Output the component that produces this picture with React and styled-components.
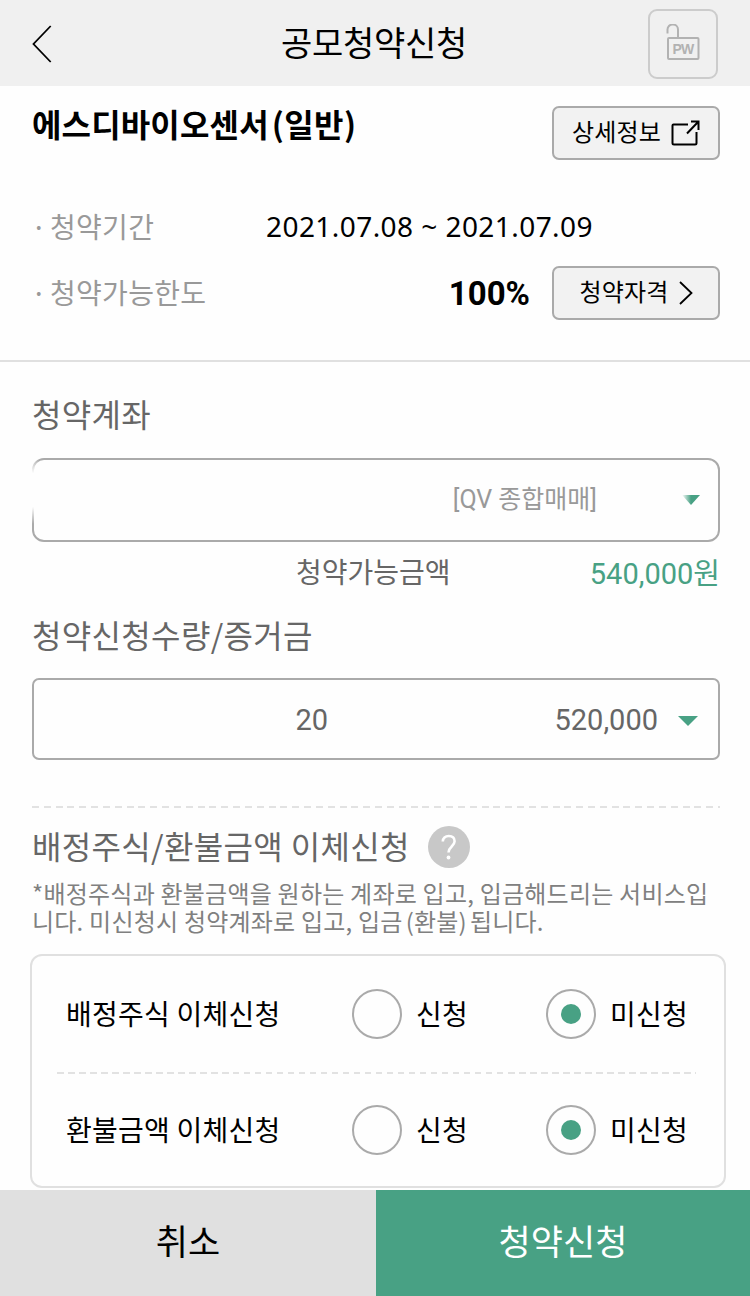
import React, { useState } from 'react';
import styled, { createGlobalStyle } from 'styled-components';

const GlobalStyle = createGlobalStyle`
  * {
    box-sizing: border-box;
  }

  body {
    margin: 0;
    background: #fefefe;
    color: #000;
    font-family: 'Noto Sans CJK KR', sans-serif;
  }

  button {
    font-family: inherit;
    color: inherit;
    cursor: pointer;
  }
`;

const Page = styled.div`
  display: flex;
  flex-direction: column;
  width: 750px;
  height: 1296px;
  overflow: hidden;
`;

const Header = styled.header`
  display: grid;
  grid-template-columns: 70px 1fr 70px;
  align-items: center;
  height: 86px;
  padding: 0 32px;
  background: #f0f0f0;
`;

const BackButton = styled.button`
  display: flex;
  padding: 2px 0 0;
  border: none;
  background: none;
`;

const HeaderTitle = styled.h1`
  margin: 0;
  padding: 0 2px 2px 0;
  font-size: 34px;
  font-weight: 400;
  line-height: 40px;
  letter-spacing: -0.3px;
  text-align: center;
`;

const LockButton = styled.button`
  display: flex;
  align-items: center;
  justify-content: center;
  width: 70px;
  height: 70px;
  padding: 0;
  margin-top: 2px;
  border: 2px solid #ccc;
  border-radius: 9px;
  background: #f0f0f0;
`;

const Summary = styled.section`
  height: 276px;
  padding: 20px 30px 0 32px;
  border-bottom: 2px solid #e0e0e0;
`;

const SummaryRow = styled.div`
  display: flex;
  align-items: center;
  height: ${(props) => props.$height}px;
  padding-top: ${(props) => props.$top || 0}px;
`;

const StockName = styled.h2`
  flex: 1;
  align-self: flex-start;
  margin: 0;
  font-size: 32px;
  font-weight: 700;
  line-height: 34px;
  letter-spacing: 0.15px;
`;

const Paren = styled.span`
  margin: 0 3px;
  letter-spacing: ${(props) => props.$spacing || 0.22}px;
`;

const SummaryLabel = styled.span`
  display: flex;
  width: 234px;
  padding-bottom: 2px;
  color: #999;
  font-size: 28px;
  line-height: 34px;
  letter-spacing: 0.3px;
`;

const Bullet = styled.span`
  width: 18px;
  margin-left: -1px;
  margin-right: 1px;
`;

const Period = styled.span`
  padding-bottom: 2px;
  font-family: 'Noto Sans', sans-serif;
  font-size: 28px;
  line-height: 34px;
  letter-spacing: 0.44px;
`;

const Limit = styled.strong`
  flex: 1;
  padding: 2px 22px 0 0;
  font-family: Roboto, sans-serif;
  font-size: 33px;
  font-weight: 700;
  line-height: 34px;
  text-align: right;
`;

const SmallButton = styled.button`
  display: flex;
  align-items: center;
  justify-content: center;
  gap: 10px;
  width: 168px;
  height: 54px;
  padding: 0;
  border: 2px solid #aaa;
  border-radius: 7px;
  background: #f2f2f2;
  font-size: 24px;
  line-height: 30px;
`;

const ButtonText = styled.span`
  padding-bottom: 4px;
  letter-spacing: 0.2px;
`;

const Form = styled.section`
  flex: 1;
  display: flex;
  flex-direction: column;
  padding: 33px 30px 0 32px;
`;

const FieldLabel = styled.h3`
  margin: 0 0 ${(props) => props.$gap || 0}px;
  color: #666;
  font-size: 32px;
  font-weight: 400;
  line-height: 36px;
  letter-spacing: 0.34px;
`;

const SelectBox = styled.div`
  position: relative;
  display: flex;
  align-items: center;
  height: ${(props) => props.$height}px;
  border: 2px solid #aaa;
  border-radius: ${(props) => props.$radius}px;
  cursor: pointer;
`;

const EdgeFade = styled.span`
  position: absolute;
  left: -8px;
  top: -8px;
  width: 44px;
  height: 76px;
  background: radial-gradient(ellipse 16px 34px at 6px 38px, #fefefe 50%, rgba(254, 254, 254, 0) 100%);
`;

const AccountName = styled.span`
  margin-left: auto;
  margin-right: 85px;
  color: #999;
  font-family: Roboto, 'Noto Sans CJK KR', sans-serif;
  font-size: 25px;
  line-height: 30px;
`;

const Quantity = styled.span`
  width: 294px;
  padding-top: 2px;
  color: #666;
  font-family: Roboto, sans-serif;
  font-size: 29px;
  line-height: 34px;
  text-align: right;
`;

const Deposit = styled.span`
  flex: 1;
  padding: 2px 20px 0 0;
  color: #666;
  font-family: Roboto, sans-serif;
  font-size: 29px;
  line-height: 34px;
  text-align: right;
`;

const Arrow = styled.svg`
  flex: none;
  margin-top: ${(props) => props.$top || 0}px;
  margin-right: ${(props) => props.$right}px;
`;

const Available = styled.div`
  display: flex;
  justify-content: space-between;
  align-items: center;
  height: 60px;
  margin-bottom: 14px;
  padding-left: 264px;
  color: #666;
  font-size: 28px;
  line-height: 34px;
`;

const AvailableLabel = styled.span`
  padding-bottom: 2px;
`;

const Amount = styled.span`
  padding-top: 3px;
  color: #48a184;
  font-family: Roboto, 'Noto Sans CJK KR', sans-serif;
  font-size: 29px;
`;

const Dashes = styled.div`
  height: 2px;
  margin: ${(props) => props.$margin};
  background: repeating-linear-gradient(
    to right,
    #e2e2e2 0 ${(props) => props.$dash}px,
    transparent ${(props) => props.$dash}px ${(props) => props.$step}px
  );
`;

const HeadingRow = styled.div`
  display: flex;
  align-items: center;
  gap: 18px;
  height: 42px;
`;

const HeadingLabel = styled(FieldLabel)`
  padding-bottom: 4px;
`;

const Help = styled.button`
  display: flex;
  padding: 0;
  border: none;
  background: none;
`;

const Notice = styled.p`
  margin: 11px 0 19px;
  color: #808080;
  font-size: 24px;
  line-height: 28px;
  letter-spacing: 0.22px;
  white-space: nowrap;
`;

const TransferBox = styled.div`
  width: 696px;
  height: 234px;
  margin-left: -2px;
  border: 2px solid #e0e0e0;
  border-radius: 12px;
`;

const TransferRow = styled.div`
  display: grid;
  grid-template-columns: 286px 194px 1fr;
  align-items: center;
  height: ${(props) => props.$height}px;
  padding-left: 34px;
  font-size: 28px;
  line-height: 34px;
`;

const Option = styled.label`
  display: flex;
  align-items: center;
  gap: 14px;
  cursor: pointer;
`;

const HiddenRadio = styled.input`
  position: absolute;
  opacity: 0;
  pointer-events: none;
`;

const Ring = styled.span`
  display: flex;
  align-items: center;
  justify-content: center;
  width: 50px;
  height: 50px;
  border: 2px solid #aaa;
  border-radius: 50%;
`;

const Dot = styled.span`
  width: 20px;
  height: 20px;
  border-radius: 50%;
  background: #48a184;
`;

const Footer = styled.footer`
  display: grid;
  grid-template-columns: 376px 1fr;
  height: 106px;
`;

const FooterButton = styled.button`
  padding: 0 0 6px;
  border: none;
  background: ${(props) => (props.$primary ? '#48a184' : '#e0e0e0')};
  color: ${(props) => (props.$primary ? '#fff' : '#000')};
  font-size: 35px;
  line-height: 42px;
`;

const RowText = styled.span`
  padding-bottom: 2px;
  letter-spacing: 0.25px;
  white-space: nowrap;
`;

const TransferOptions = ({ name, title, height }) => {
  const [value, setValue] = useState('no');

  const options = [
    { id: 'yes', text: '신청' },
    { id: 'no', text: '미신청' },
  ];

  return (
    <TransferRow $height={height}>
      <RowText>{title}</RowText>
      {options.map((option) => (
        <Option key={option.id}>
          <HiddenRadio
            type="radio"
            name={name}
            checked={value === option.id}
            onChange={() => setValue(option.id)}
          />
          <Ring>{value === option.id && <Dot />}</Ring>
          <RowText>{option.text}</RowText>
        </Option>
      ))}
    </TransferRow>
  );
};

const App = () => {
  return (
    <Page>
      <GlobalStyle />
      <Header>
        <BackButton aria-label="뒤로">
          <svg width="20" height="38" viewBox="0 0 20 38" fill="none" stroke="#000" strokeWidth="1.8">
            <path d="M18.7 1L1.5 19l17.2 18" />
          </svg>
        </BackButton>
        <HeaderTitle>공모청약신청</HeaderTitle>
        <LockButton>
          <svg width="34" height="40" viewBox="0 0 34 40" fill="none" stroke="#b2b2b2" strokeWidth="2">
            <path d="M1.500 9.500V5.500a5 5 0 0 1 5-5h.5a5 5 0 0 1 5 5v8.500" overflow="visible" />
            <rect x="2" y="14" width="30.500" height="21" rx="1" />
            <text
              x="17"
              y="29.500"
              textAnchor="middle"
              fill="#b2b2b2"
              stroke="none"
              fontFamily="Liberation Sans, sans-serif"
              fontWeight="700"
              fontSize="14"
              letterSpacing="-0.8"
            >
              PW
            </text>
          </svg>
        </LockButton>
      </Header>

      <Summary>
        <SummaryRow $height={54}>
          <StockName>
            에스디바이오센서<Paren $spacing={0.4}>(일반)</Paren>
          </StockName>
          <SmallButton>
            <ButtonText>상세정보</ButtonText>
            <svg width="29" height="26" viewBox="0 0 29 26" fill="none" stroke="#000" strokeWidth="2">
              <path d="M17 4.5H2.5a1 1 0 0 0-1 1V23a1.500 1.500 0 0 0 1.500 1.500h21a1.500 1.500 0 0 0 1.500-1.500V12" />
              <path d="M16 13.500L27 2M20 1.500h7.500V10" />
            </svg>
          </SmallButton>
        </SummaryRow>
        <SummaryRow $height={106} $top={28}>
          <SummaryLabel>
            <Bullet>·</Bullet>청약기간
          </SummaryLabel>
          <Period>2021.07.08 ~ 2021.07.09</Period>
        </SummaryRow>
        <SummaryRow $height={54}>
          <SummaryLabel>
            <Bullet>·</Bullet>청약가능한도
          </SummaryLabel>
          <Limit>100%</Limit>
          <SmallButton>
            <ButtonText>청약자격</ButtonText>
            <svg width="14" height="24" viewBox="0 0 14 24" fill="none" stroke="#000" strokeWidth="1.800">
              <path d="M1 1l11.500 11L1 23" />
            </svg>
          </SmallButton>
        </SummaryRow>
      </Summary>

      <Form>
        <FieldLabel $gap={27}>청약계좌</FieldLabel>
        <SelectBox $height={84} $radius={12}>
          <EdgeFade />
          <AccountName>[QV 종합매매]</AccountName>
          <Arrow $right={18} width="18" height="10" viewBox="0 0 18 10">
            <defs>
              <linearGradient id="arrowFade">
                <stop offset="0" stopColor="#48a184" stopOpacity="0" />
                <stop offset="0.5" stopColor="#48a184" />
              </linearGradient>
            </defs>
            <path d="M0 0h18L9 10z" fill="url(#arrowFade)" />
          </Arrow>
        </SelectBox>
        <Available>
          <AvailableLabel>청약가능금액</AvailableLabel>
          <Amount>540,000원</Amount>
        </Available>

        <FieldLabel $gap={26}>청약신청수량/증거금</FieldLabel>
        <SelectBox $height={82} $radius={7}>
          <Quantity>20</Quantity>
          <Deposit>520,000</Deposit>
          <Arrow $top={4} $right={20} width="20" height="10" viewBox="0 0 20 10">
            <path d="M0 0h20L10 10z" fill="#48a184" />
          </Arrow>
        </SelectBox>

        <Dashes $margin="46px 0 18px" $dash={7} $step={11.83} />

        <HeadingRow>
          <HeadingLabel>배정주식/환불금액 이체신청</HeadingLabel>
          <Help aria-label="도움말">
            <svg width="42" height="42" viewBox="0 0 42 42" fill="none">
              <circle cx="21" cy="21" r="21" fill="#c8c8c8" />
              <path
                d="M14.800 15.500c0-3.500 2.500-5.500 6-5.500s5.800 2 5.800 5.300c0 2.700-1.500 4-3.300 5.700-1.800 1.600-2.800 2.800-2.800 5.500"
                stroke="#fff"
                strokeWidth="2.600"
              />
              <circle cx="20.500" cy="31.500" r="1.900" fill="#fff" />
            </svg>
          </Help>
        </HeadingRow>
        <Notice>
          *배정주식과 환불금액을 원하는 계좌로 입고, 입금해드리는 서비스입
          <br />
          니다. 미신청시 청약계좌로 입고, 입금<Paren>(환불)</Paren>됩니다.
        </Notice>

        <TransferBox>
          <TransferOptions name="stock" title="배정주식 이체신청" height={116} />
          <Dashes $margin="0 28px 0 25px" $dash={6.5} $step={11} />
          <TransferOptions name="refund" title="환불금액 이체신청" height={112} />
        </TransferBox>
      </Form>

      <Footer>
        <FooterButton>취소</FooterButton>
        <FooterButton $primary>청약신청</FooterButton>
      </Footer>
    </Page>
  );
};

export default App;
